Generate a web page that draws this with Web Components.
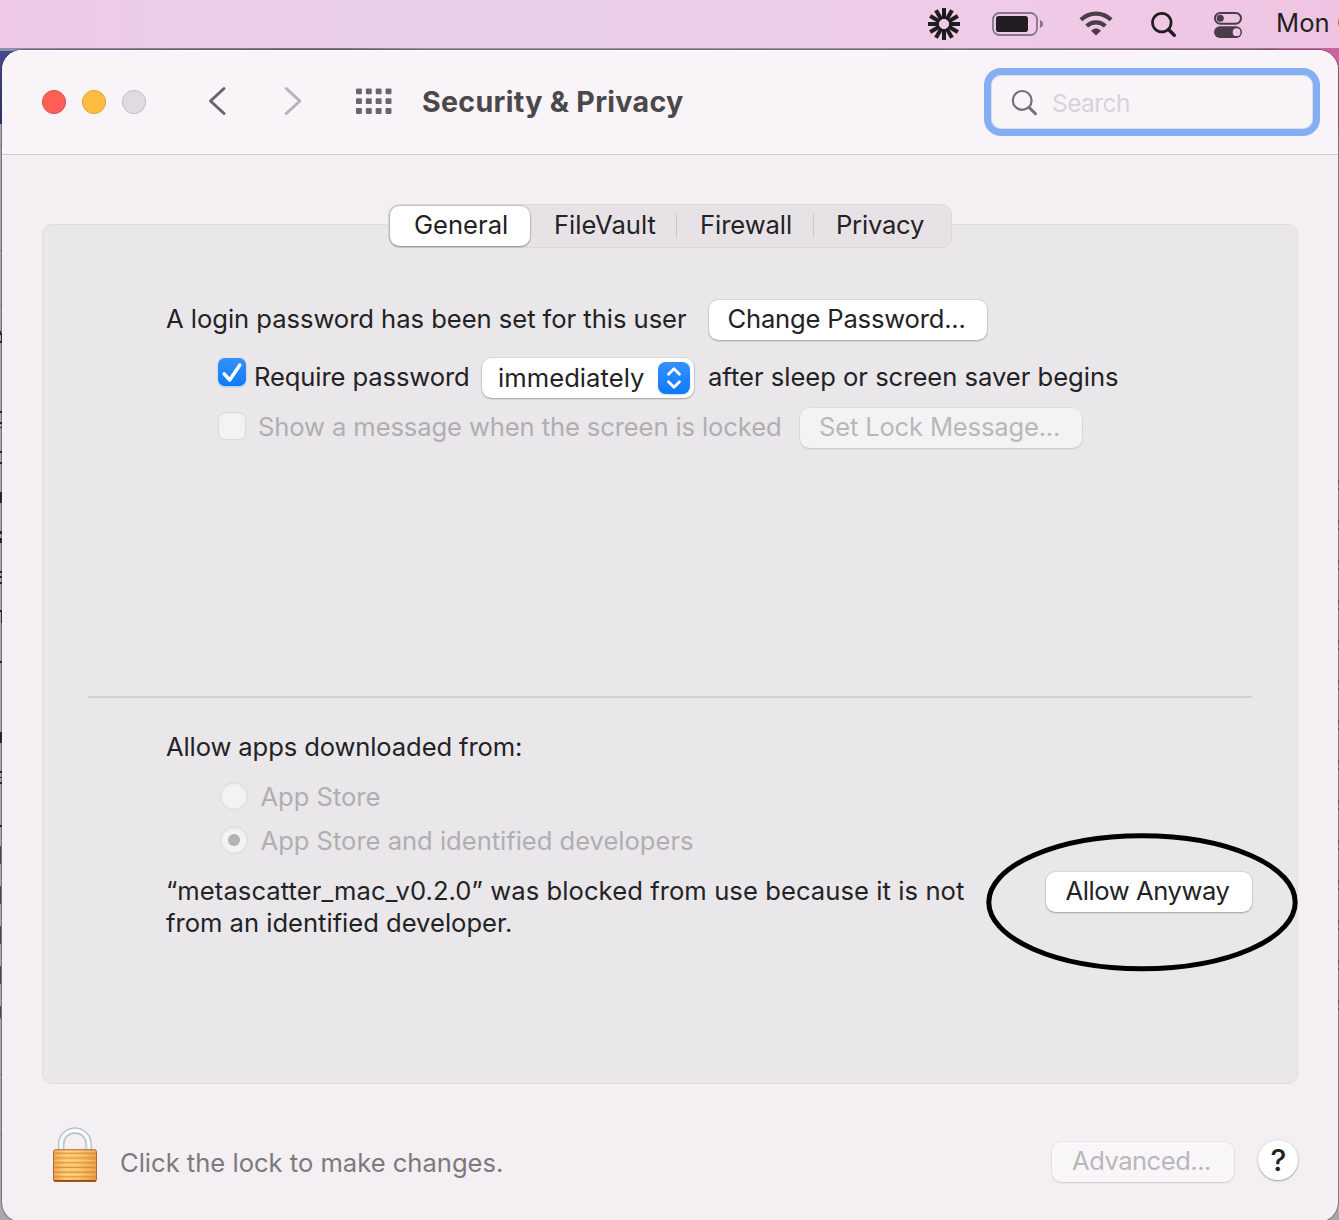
<!DOCTYPE html>
<html lang="en">
<head>
<meta charset="utf-8">
<title>Security &amp; Privacy</title>
<style>
html,body{margin:0;height:1220px;overflow:hidden}
body{font-family:Inter,"Liberation Sans",sans-serif;color:#232225}
</style>
</head>
<body>
<mac-desktop>
  <menu-bar slot="menu"></menu-bar>
  <prefs-window slot="window">
    <title-bar slot="title"></title-bar>
    <tab-strip slot="tabs"></tab-strip>
    <general-pane slot="pane"></general-pane>
    <window-footer slot="footer"></window-footer>
  </prefs-window>
</mac-desktop>
<script>
const define = (name, html, ready) => {
  const t = document.createElement('template');
  t.innerHTML = html;
  customElements.define(name, class extends HTMLElement {
    constructor() {
      super();
      this.attachShadow({mode: 'open'}).append(t.content.cloneNode(true));
    }
    connectedCallback() { if (ready) ready(this, this.shadowRoot); }
  });
};

/* One line of text whose glyphs span exactly "w" pixels. */
const ctx = document.createElement('canvas').getContext('2d');
define('text-line', `<style>
:host{display:block;flex:none;white-space:nowrap;line-height:32px;height:32px}
span{display:block;width:max-content}
</style><span><slot></slot></span>`, (el, root) => {
  const size = +(el.getAttribute('size') || 25.6), w = +el.getAttribute('w');
  const weight = el.getAttribute('weight') || 400, s = el.textContent;
  ctx.font = `${weight} ${size}px Inter`;
  const m = ctx.measureText(s);
  const ink = m.actualBoundingBoxLeft + m.actualBoundingBoxRight;
  el.style.width = w + 'px';
  const span = root.querySelector('span');
  span.style.fontSize = size + 'px';
  span.style.fontWeight = weight;
  if (s.length > 1) span.style.letterSpacing = ((w - ink) / (s.length - 1)).toFixed(3) + 'px';
  span.style.marginLeft = m.actualBoundingBoxLeft.toFixed(2) + 'px';
});

define('push-button', `<style>
:host{display:flex;flex:none;box-sizing:border-box;height:40px;padding:0 0 2px;align-items:center;justify-content:center;background:#fff;border-radius:9.5px;box-shadow:0 0 0 1px rgba(0,0,0,.06),0 1px 2px rgba(0,0,0,.27)}
:host([disabled]){background:#f3f3f4;color:#b9b7ba;box-shadow:0 0 0 1px rgba(0,0,0,.03),0 1px 2px rgba(0,0,0,.13)}
</style><slot></slot>`, el => { el.style.width = el.getAttribute('width') + 'px'; });

define('check-box', `<style>
:host{display:block;flex:none;width:28px;height:28px;border-radius:6.5px;box-sizing:border-box;background:#f3f3f3;border:1px solid #dbdadb;box-shadow:inset 0 1px 2px rgba(0,0,0,.06)}
:host([checked]){background:linear-gradient(#3592fb,#0f79fc);border:0;box-shadow:0 1px 2px rgba(20,110,240,.3)}
svg{display:none}:host([checked]) svg{display:block}
</style><svg width="28" height="28" viewBox="0 0 28 28"><path d="M6.2 15.8 11.7 22 21.8 7" fill="none" stroke="#fff" stroke-width="3.5" stroke-linecap="round" stroke-linejoin="round"/></svg>`);

define('radio-dot', `<style>
:host{display:grid;place-items:center;flex:none;width:28px;height:28px;border-radius:50%;box-sizing:border-box;background:#f3f3f3;border:1px solid #dad9db;box-shadow:inset 0 1px 3px rgba(0,0,0,.07)}
i{display:none;width:12px;height:12px;border-radius:50%;background:#b4b2b5}
:host([checked]) i{display:block}
</style><i></i>`);

define('pop-up', `<style>
:host{display:flex;flex:none;box-sizing:border-box;width:212px;height:40px;padding:0 4px 0 17px;align-items:center;justify-content:space-between;background:#fff;border-radius:9.5px;box-shadow:0 0 0 1px rgba(0,0,0,.06),0 1px 2px rgba(0,0,0,.27)}
slot{display:block}
svg{display:block;border-radius:7.5px;background:linear-gradient(#3592fb,#0f79fc);box-shadow:0 1px 2px rgba(20,110,240,.25)}
</style><slot></slot><svg width="32" height="32" viewBox="0 0 32 32"><path d="M10.5 12.3 16 6.7l5.5 5.6M10.5 19.7l5.5 5.6 5.5-5.6" fill="none" stroke="#fff" stroke-width="2.8" stroke-linecap="round" stroke-linejoin="round"/></svg>`);

define('mac-desktop', `<style>
:host{display:flex;flex-direction:column;width:1339px;height:1220px;overflow:hidden;position:relative;background:#a9a7a9}
.wall{position:absolute;left:0;top:48px;width:1339px;height:1172px}
slot{position:relative;display:block}
</style>
<svg class="wall" viewBox="0 48 1339 1172">
<defs><linearGradient id="g" x1="0" x2="1" y1="0" y2="0"><stop offset="0" stop-color="#8b93a8"/><stop offset=".25" stop-color="#77747e"/><stop offset=".32" stop-color="#a195a3"/><stop offset=".7" stop-color="#a18c9b"/><stop offset=".93" stop-color="#a67d96"/><stop offset=".96" stop-color="#b85a8c"/></linearGradient>
<linearGradient id="b" x1="0" x2="0" y1="0" y2="1"><stop offset="0" stop-color="#46468f"/><stop offset="1" stop-color="#2b2f70"/></linearGradient></defs>
<rect x="0" y="48" width="1339" height="4" fill="url(#g)"/>
<rect x="0" y="51" width="60" height="73" fill="url(#b)"/>
<rect x="1275" y="48" width="64" height="86" fill="#c9659c"/>
<g fill="#8b898b"><rect y="145" width="2" height="1"/><rect y="250" width="2" height="1"/><rect y="305" width="2" height="1"/><rect y="1018" width="2" height="1"/><rect y="1074" width="2" height="1"/><rect y="1134" width="2" height="1"/></g>
<path d="M0 331h1v4h-1zM0 341h2v2h-2zM1 333h1v8h-1zM0 411h2v2h-2zM0 422h2v2h-2zM0 427h2v1h-2zM0 451h2v2h-2zM0 462h2v2h-2zM0 492h2v11h-2zM0 531h2v3h-2zM0 538h2v5h-2zM0 571h2v2h-2zM0 576h2v2h-2zM0 582h2v2h-2zM0 610h2v2h-2zM1 612h1v11h-1zM0 661h2v2h-2zM0 732h2v11h-2zM0 771h2v2h-2zM0 777h2v1h-2zM0 782h2v2h-2zM0 825h2v2h-2z" fill="#222125"/>
<path d="M0 846h1v18h-1zM0 886h1v18h-1zM0 926h1v18h-1zM0 966h1v18h-1zM0 1006h1v12h-1z" fill="#48474e"/>
<path d="M1338 150h1v1060h-1z" fill="#b5b2b6"/>
<path d="M1338.500 480V1010" stroke="#626068" stroke-dasharray="3 5 2 30"/>
</svg>
<slot name="menu"></slot><slot name="window"></slot>`);

define('menu-bar', `<style>
:host{display:flex;box-sizing:border-box;height:48px;width:1339px;padding-left:927px;align-items:flex-start;overflow:hidden;background:linear-gradient(90deg,#edc9e7 0,#eacde7 14%,#e9cfe7 40%,#edcce7 70%,#efc8e5 85%,#eec4e1 100%);color:#231f23}
svg{display:block;flex:none}
text-line{margin:7px 0 0 2px}
</style>
<svg width="349" height="48" viewBox="927 0 349 48" fill="none">
<g id="rays" stroke="#211c21" stroke-width="4"></g>
<rect x="993" y="13" width="44" height="22" rx="6.500" stroke="#86758a" stroke-width="1.800"/>
<rect x="996" y="16" width="32" height="16" rx="2.800" fill="#231d23"/>
<path d="M1040 20c4 1.500 4 6.500 0 8z" fill="#86758a"/>
<g stroke="#4a3c48" stroke-width="4.200"><path d="M1080.900 19.800A21.600 21.600 0 0 1 1111.100 19.800"/><path d="M1086.700 26A13.600 13.600 0 0 1 1105.300 26"/></g>
<path d="M1091 30.700Q1096 25.600 1101 30.700L1096 35.400z" fill="#4a3c48"/>
<circle cx="1161.800" cy="22.600" r="9.300" stroke="#231d23" stroke-width="2.700"/><path d="M1168.600 29.600 1174.300 35.200" stroke="#231d23" stroke-width="3.500" stroke-linecap="round"/>
<rect x="1215" y="13" width="26" height="10.700" rx="5.350" stroke="#4a3c48" stroke-width="2"/><circle cx="1220.300" cy="18.300" r="3.500" fill="#4a3c48"/>
<rect x="1214" y="26.300" width="28" height="11.700" rx="5.850" fill="#4a3c48"/><circle cx="1236.600" cy="32.200" r="3.900" fill="#efc8e5"/>
</svg>
<text-line w="78">Mon O</text-line>`, (el, root) => {
  let s = '';
  for (let i = 0; i < 12; i++) s += `<path d="M944 8V19" transform="rotate(${i * 30} 944 24)"/>`;
  root.getElementById('rays').innerHTML = s;
});

define('prefs-window', `<style>
:host{display:flex;flex-direction:column;box-sizing:border-box;position:relative;width:1336px;height:1172px;margin:2px 0 0 2px;border-radius:20px;background:#f4eff3;overflow:hidden;box-shadow:0 0 0 1px rgba(60,55,65,.45)}
.body{display:flex;flex-direction:column;padding:49px 40px 0}
slot{display:block}
slot[name=tabs]{display:flex;justify-content:center;position:relative;z-index:1}
slot[name=pane]{margin-top:-24px}
</style><slot name="title"></slot><div class="body"><slot name="tabs"></slot><slot name="pane"></slot><slot name="footer"></slot></div>`);

define('title-bar', `<style>
:host{display:flex;box-sizing:border-box;height:105px;background:#f8f4f8;border-bottom:1px solid #cdc9cd;box-shadow:inset 0 1px #fff}
svg{display:block;flex:none}
text-line{margin:36px 0 0 0;color:#4a484b}
.field{display:flex;box-sizing:border-box;width:336px;height:68px;margin:18px 0 0 301px;border:7px solid #85aff3;border-radius:17px;box-shadow:inset 0 0 0 1px #dedbe3}
.field text-line{margin:12px 0 0 14px;color:#d7d3d8}
</style>
<svg width="421" height="104" viewBox="2 50 421 104" fill="none">
<circle cx="54" cy="102" r="11.600" fill="#fe5f58" stroke="#dd4943" stroke-width=".9"/>
<circle cx="94" cy="102" r="11.600" fill="#febc40" stroke="#dd9e35" stroke-width=".9"/>
<circle cx="134" cy="102" r="11.600" fill="#dfdbe0" stroke="#bcb9be" stroke-width=".9"/>
<g stroke-width="3" stroke-linecap="round" stroke-linejoin="round"><path d="M224 88.500 210.500 101 224 113.500" stroke="#6b656b"/><path d="M286.300 88.500 299.800 101 286.300 113.500" stroke="#b8b2b8"/></g>
<g id="dots" fill="#6b656b"></g></svg>
<text-line w="260" size="28.600" weight="650">Security &amp; Privacy</text-line>
<div class="field"><svg width="48" height="54" viewBox="991 75 48 54" fill="none" stroke="#727075"><circle cx="1022.200" cy="100.400" r="9.400" stroke-width="2.200"/><path d="M1029.200 107.600 1035.500 113.800" stroke-width="3" stroke-linecap="round"/></svg><text-line w="76" size="24.500">Search</text-line></div>`, (el, root) => {
  let s = '';
  for (let r = 0; r < 3; r++) for (let c = 0; c < 4; c++) s += `<rect x="${356 + c * 9.85}" y="${88.4 + r * 9.8}" width="5.900" height="5.900" rx="1.200"/>`;
  root.getElementById('dots').innerHTML = s;
});

define('tab-strip', `<style>
:host{display:flex;box-sizing:border-box;width:564px;height:44px;border-radius:11px;background:#e6e2e6;border:1px solid #dad7db;align-items:center}
.on{display:flex;width:140px;height:40px;justify-content:center;background:#fff;border-radius:9.500px;box-shadow:0 0 0 1px rgba(0,0,0,.12),0 1px 2px rgba(0,0,0,.3);margin-right:26px;margin-left:1px}
.on text-line{margin:3px 0 0 2px}
text-line{margin-top:-3px}
i{width:1px;height:24px;background:#cbc8cc}
</style><div class="on"><text-line w="92">General</text-line></div>
<text-line w="99.500">FileVault</text-line><i style="margin:0 25px 0 20.500px"></i><text-line w="89">Firewall</text-line><i style="margin:0 24px 0 22px"></i><text-line w="86">Privacy</text-line>`);

define('general-pane', `<style>
:host{display:block;box-sizing:border-box;height:860px;border:1px solid #e0dde1;border-radius:10px;background:#e9e7ea;padding:69px 45px 0;position:relative}
.row{display:flex;align-items:center;height:50px}
.top,.bot{display:flex;flex-direction:column;padding-left:78px}
.row>text-line{margin-bottom:2px}
.dim{color:#b0aeb1}
hr{border:0;height:2px;margin:243px 0 0;background:#d1cfd2}
.choice{display:flex;height:44px;align-items:center;padding-left:54px;color:#b0aeb1}
.choice text-line{margin:2px 0 0 12.500px}
.ring{position:absolute;left:943px;top:608px}
</style>
<div class="top">
<div class="row" style="height:51px"><text-line w="521" style="margin-right:22px">A login password has been set for this user</text-line><push-button width="278"><text-line w="236" style="margin-right:3px">Change Password...</text-line></push-button></div>
<div class="row" style="padding:8px 0 0 52px;height:49px"><check-box checked style="margin-bottom:12px"></check-box><text-line w="212" style="margin:0 14px 2px 10px">Require password</text-line><pop-up><text-line w="145">immediately</text-line></pop-up><text-line w="409" style="margin-left:15px">after sleep or screen saver begins</text-line></div>
<div class="row dim" style="padding:1px 0 0 52px"><check-box style="margin-bottom:4px"></check-box><text-line w="521" style="margin-left:13px;margin-right:20px">Show a message when the screen is locked</text-line><push-button disabled width="282"><text-line w="239" style="margin-right:3px">Set Lock Message...</text-line></push-button></div>
</div>
<hr>
<div class="bot">
<text-line w="355" style="margin:33px 0 11px 0">Allow apps downloaded from:</text-line>
<div class="choice"><radio-dot></radio-dot><text-line w="119">App Store</text-line></div>
<div class="choice"><radio-dot checked></radio-dot><text-line w="432.500">App Store and identified developers</text-line></div>
<div style="display:flex;justify-content:space-between;margin-top:13px"><div><text-line w="797" style="margin-left:1px">“metascatter_mac_v0.2.0” was blocked from use because it is not</text-line><text-line w="345">from an identified developer.</text-line></div><push-button width="206" style="margin-top:-3px"><text-line w="164" style="margin-right:3px">Allow Anyway</text-line></push-button></div>
</div>
<svg class="ring" width="314" height="140" viewBox="0 0 314 140"><ellipse cx="156" cy="69.200" rx="153.200" ry="66.500" fill="none" stroke="#000" stroke-width="5"/></svg>`);

define('window-footer', `<style>
:host{display:flex;align-items:flex-start;height:136px}
svg{display:block;flex:none;margin:42px 0 0 10px}
.hint{margin:63px auto 0 22px;color:#7c797d}
push-button{margin:58px 24px 0 0}
push-button[disabled]{background:#f9f6fa}
.help{display:flex;justify-content:center;width:40px;height:40px;border-radius:50%;background:#fff;margin-top:56px;box-shadow:0 0 0 1px rgba(0,0,0,.05),0 1px 2px rgba(0,0,0,.3)}
.help text-line{margin:4px 0 0 2px}
</style>
<svg width="47" height="58" viewBox="52 1126 47 58">
<defs><linearGradient id="m" x1="0" x2="1" y1="0" y2="0"><stop offset="0" stop-color="#eb9f45"/><stop offset=".3" stop-color="#fdcb75"/><stop offset=".55" stop-color="#fcc46a"/><stop offset="1" stop-color="#e8983c"/></linearGradient></defs>
<g fill="none"><path d="M61.200 1151V1144a13.700 13.400 0 0 1 27.400 0V1151" stroke="#a3afb6" stroke-width="6.200"/><path d="M61.200 1151V1144a13.700 13.400 0 0 1 27.400 0V1151" stroke="#d3dde2" stroke-width="4.800"/><path d="M61 1151V1144a13.900 13.600 0 0 1 27.800 0V1151" stroke="#fafdff" stroke-width="2.600"/></g>
<rect x="53.500" y="1149.700" width="43" height="31.800" rx="2" fill="url(#m)" stroke="#b5682a"/>
<path d="M54.500 1153.200h41M54.500 1158h41M54.500 1162.700h41M54.500 1167.400h41M54.500 1172.100h41M54.500 1176.800h41" stroke="#dc9140" stroke-width="1.100"/>
<path d="M54.500 1151.300h41M54.500 1155.800h41M54.500 1160.500h41M54.500 1165.200h41M54.500 1169.900h41M54.500 1174.600h41" stroke="#ffe19b" stroke-width="1" opacity=".4"/>
<path d="M54 1180.800h42" stroke="#99450f" stroke-width="1.500"/>
</svg>
<text-line class="hint" w="381">Click the lock to make changes.</text-line>
<push-button disabled width="182"><text-line w="138" style="margin-right:4px">Advanced...</text-line></push-button>
<div class="help"><text-line w="15" size="30" weight="450">?</text-line></div>`);
</script>
</body>
</html>
